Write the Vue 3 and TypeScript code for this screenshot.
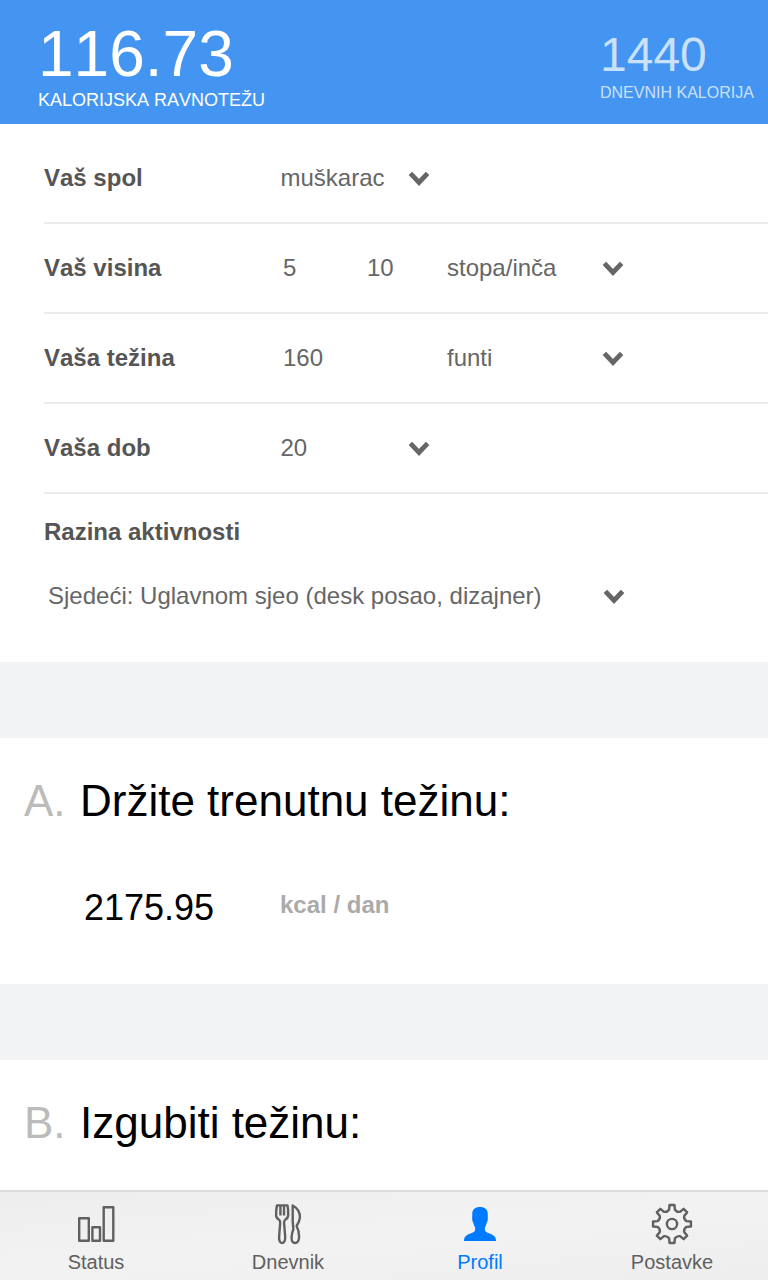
<script setup lang="ts">
interface Field {
  label: string
  values: { text: string; kind: string }[]
  arrow: string
}

const fields: Field[] = [
  { label: 'Vaš spol', values: [{ text: 'muškarac', kind: 'choice' }], arrow: 'near' },
  {
    label: 'Vaš visina',
    values: [
      { text: '5', kind: 'first' },
      { text: '10', kind: 'second' },
      { text: 'stopa/inča', kind: 'unit' },
    ],
    arrow: 'far',
  },
  {
    label: 'Vaša težina',
    values: [
      { text: '160', kind: 'first' },
      { text: 'funti', kind: 'unit' },
    ],
    arrow: 'far',
  },
  { label: 'Vaša dob', values: [{ text: '20', kind: 'choice' }], arrow: 'near' },
]

const tabs = [
  { id: 'status', label: 'Status' },
  { id: 'diary', label: 'Dnevnik' },
  { id: 'profile', label: 'Profil' },
  { id: 'settings', label: 'Postavke' },
]
const activeTab = 'profile'

// Eight-toothed cog: each tooth is a short flat cap joined by a curved valley.
function cogPath(): string {
  const at = (radius: number, degrees: number) => {
    const a = (degrees * Math.PI) / 180
    return `${(22 + radius * Math.cos(a)).toFixed(2)} ${(22 + radius * Math.sin(a)).toFixed(2)}`
  }
  let d = ''
  for (let i = 0; i < 8; i++) {
    const c = i * 45 - 90
    d += `${i ? 'L' : 'M'}${at(14.6, c - 11.5)} L${at(19.1, c - 7.5)} L${at(19.1, c + 7.5)} L${at(14.6, c + 11.5)} Q${at(12.6, c + 22.5)} ${at(14.6, c + 33.5)} `
  }
  return d + 'Z'
}
const cog = cogPath()
</script>

<template>
  <div class="screen">
    <header class="summary">
      <div class="balance">
        <div class="balance-value">116.73</div>
        <div class="balance-label">KALORIJSKA RAVNOTEŽU</div>
      </div>
      <div class="daily">
        <div class="daily-value">1440</div>
        <div class="daily-label">DNEVNIH KALORIJA</div>
      </div>
    </header>

    <main class="content">
      <section class="form">
        <div v-for="field in fields" :key="field.label" class="row" :class="field.arrow">
          <span class="label">{{ field.label }}</span>
          <span v-for="value in field.values" :key="value.kind" class="value" :class="value.kind">{{ value.text }}</span>
          <svg class="arrow" viewBox="0 0 22 16"><path d="M2.4 2.4 11 11.5 19.6 2.4" /></svg>
        </div>
        <div class="activity-label">Razina aktivnosti</div>
        <div class="activity">
          <span class="activity-value">Sjedeći: Uglavnom sjeo (desk posao, dizajner)</span>
          <svg class="arrow" viewBox="0 0 22 16"><path d="M2.4 2.4 11 11.5 19.6 2.4" /></svg>
        </div>
      </section>

      <section class="goal keep">
        <h2><span class="letter">A.</span>Držite trenutnu težinu:</h2>
        <div class="result">
          <span class="amount">2175.95</span>
          <span class="per-day">kcal / dan</span>
        </div>
      </section>

      <section class="goal lose">
        <h2><span class="letter">B.</span>Izgubiti težinu:</h2>
      </section>
    </main>

    <nav class="tabs">
      <div v-for="tab in tabs" :key="tab.id" class="tab" :class="{ active: tab.id === activeTab }">
        <svg class="icon" viewBox="0 0 44 44">
          <g v-if="tab.id === 'status'" class="line">
            <rect x="5.2" y="16.2" width="9.6" height="22.6" />
            <rect x="18.4" y="25.2" width="7.6" height="13.6" />
            <rect x="29.7" y="5.2" width="9.6" height="33.6" />
          </g>
          <g v-else-if="tab.id === 'diary'" class="line">
            <path d="M11 3.4H21.5Q22.5 8 22.2 13.5Q21.9 16.3 19.3 17.6Q18 18.6 18.1 21L19.2 35Q19.2 41 16.1 41Q13 41 13.1 35L14.2 21Q14.3 18.6 13 17.6Q10.3 16.3 10.1 13.5Q9.9 8 11 3.4Z" />
            <path d="M14.4 3.4V13.4M18 3.4V13.4" />
            <path d="M26.7 3.5Q34.3 7.8 33.9 15.5Q33.6 19.5 30.6 24Q33.3 29 33.1 35Q32.8 41 29.1 41Q25.4 41 25.6 35.5Q25.7 31.5 27.4 27Q26.8 22 26.7 19Z" />
          </g>
          <path
            v-else-if="tab.id === 'profile'"
            class="solid"
            d="M22 5C17.2 5 14.3 7.5 14.3 11.4L14.2 15C14 17.3 14.3 19.5 15.2 20.5C15.7 22.7 16.3 24.3 17.1 25.3V28.5C16.2 30.5 13.2 31.1 10 32.6C7.2 34 6 36 6 39H38C38 36 36.8 34 34 32.6C30.8 31.1 27.8 30.5 26.9 28.5V25.3C27.7 24.3 28.3 22.7 28.8 20.5C29.7 19.5 30 17.3 29.8 15L29.7 11.4C29.7 7.5 26.8 5 22 5Z"
          />
          <g v-else class="line">
            <path :d="cog" />
            <circle cx="22" cy="22" r="5.1" />
          </g>
        </svg>
        <span class="tab-label">{{ tab.label }}</span>
      </div>
    </nav>
  </div>
</template>

<style>
body {
  margin: 0;
}
</style>

<style scoped>
.screen {
  width: 768px;
  height: 1280px;
  display: flex;
  flex-direction: column;
  overflow: hidden;
  background: #f2f3f5;
  font-family: "Liberation Sans", Arial, sans-serif;
  font-kerning: none;
  color: #000;
}
.summary {
  height: 124px;
  flex: none;
  box-sizing: border-box;
  display: flex;
  padding-left: 38px;
  background: #4495f1;
  color: #fff;
  white-space: nowrap;
}
.balance {
  width: 562px;
  padding-top: 18px;
}
.balance-value {
  font-size: 64px;
  line-height: 72px;
}
.balance-label {
  font-size: 18px;
  line-height: 20px;
}
.daily {
  padding-top: 28px;
  color: #cae1fb;
}
.daily-value {
  font-size: 48px;
  line-height: 54px;
}
.daily-label {
  font-size: 16px;
  line-height: 22px;
}
.content {
  flex: 1;
  min-height: 0;
}
.form {
  height: 538px;
  box-sizing: border-box;
  padding: 10px 0 0 44px;
  background: #fff;
  font-size: 24px;
}
.row {
  height: 90px;
  box-sizing: border-box;
  border-bottom: 2px solid #ebebeb;
  display: grid;
  grid-template-columns: 236.5px 86.5px 80px 156px 1fr;
  align-items: center;
  line-height: 28px;
}
.row > * {
  grid-row: 1;
}
.label,
.activity-label {
  font-weight: bold;
  color: #555;
}
.label {
  grid-column: 1;
}
.value,
.activity-value {
  color: #666;
}
.choice {
  grid-column: 2 / 4;
}
.first {
  grid-column: 2;
  padding-left: 2.5px;
}
.second {
  grid-column: 3;
}
.unit {
  grid-column: 4;
}
.arrow {
  width: 22px;
  height: 16px;
  fill: none;
  stroke: #666;
  stroke-width: 4.8;
}
.row .arrow {
  margin-top: 2px;
}
.near .arrow {
  grid-column: 3 / 5;
  margin-left: 41px;
}
.far .arrow {
  grid-column: 5;
  margin-left: -1px;
}
.activity-label {
  padding-top: 24px;
  line-height: 28px;
}
.activity {
  display: flex;
  align-items: center;
  height: 28px;
  margin-top: 36px;
  padding-left: 4px;
  white-space: nowrap;
}
.activity .arrow {
  margin-top: 2px;
}
.activity-value {
  width: 555px;
}
.goal {
  margin-top: 76px;
  box-sizing: border-box;
  padding: 37px 24px 0;
  background: #fff;
}
.keep {
  height: 246px;
}
.lose {
  height: 130px;
}
h2 {
  margin: 0;
  display: flex;
  font-size: 44px;
  line-height: 52px;
  font-weight: normal;
}
.letter {
  width: 56px;
  color: #bbb;
}
.result {
  display: flex;
  padding: 60px 0 0 60px;
}
.amount {
  width: 196px;
  font-size: 36px;
  line-height: 42px;
}
.per-day {
  font-size: 24px;
  line-height: 36px;
  font-weight: bold;
  color: #aaa;
}
.tabs {
  height: 90px;
  flex: none;
  box-sizing: border-box;
  display: grid;
  grid-template-columns: repeat(4, 1fr);
  border-top: 2px solid #dcdcdc;
  background: linear-gradient(175deg, #eeeeee, #f2f2f2 50%, #eeeeee);
}
.tab {
  display: flex;
  flex-direction: column;
  align-items: center;
  padding-top: 10px;
  color: #606060;
}
.active {
  color: #007aff;
}
.icon {
  width: 44px;
  height: 44px;
}
.line {
  fill: none;
  stroke: currentColor;
  stroke-width: 2.4;
  stroke-linejoin: round;
}
.solid {
  fill: currentColor;
}
.tab-label {
  margin-top: 4px;
  font-size: 20px;
  line-height: 24px;
}
</style>
